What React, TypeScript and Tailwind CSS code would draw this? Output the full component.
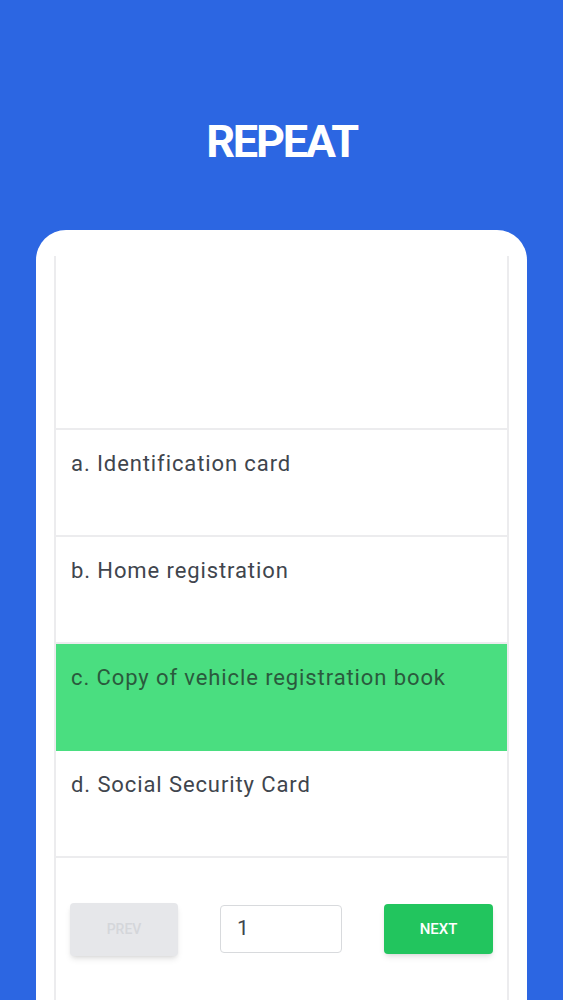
import React from 'react';

// answer choices for the current question
const choices = [
  { key: 'a', label: 'Identification card', correct: false },
  { key: 'b', label: 'Home registration', correct: false },
  { key: 'c', label: 'Copy of vehicle registration book', correct: true },
  { key: 'd', label: 'Social Security Card', correct: false },
];

const App = () => {
  return (
    <div
      className="h-[1000px] w-full overflow-hidden bg-[#2c66e2] flex flex-col items-center"
      style={{ fontFamily: 'Roboto, "Liberation Sans", sans-serif' }}
    >
      {/* Header */}
      <h1 className="mt-[112px] h-[60px] text-[45px] leading-[60px] font-bold text-white tracking-[-2.2px]">
        REPEAT
      </h1>

      {/* Card */}
      <div className="mt-[58px] w-[491px] flex-1 bg-white rounded-t-[30px] px-[18px] pt-[26px]">
        <div className="h-[172px] border-x-2 border-[#ececee]" />
        <div className="border-2 border-b-0 border-[#ececee]">
          {choices.map((c) => (
            <div
              key={c.key}
              className={
                c.correct
                  ? 'h-[107px] bg-[#4ade80] border-b-2 border-[#4ade80] px-[15px] pt-[19px]'
                  : 'h-[107px] bg-white border-b-2 border-[#ececee] px-[15px] pt-[19px]'
              }
            >
              <p
                className={
                  c.correct
                    ? 'text-[22px] leading-[30px] text-[#2a5a3d] tracking-[0.9px]'
                    : 'text-[22px] leading-[30px] text-[#40454d] tracking-[0.9px]'
                }
              >
                {c.key}. {c.label}
              </p>
            </div>
          ))}

          {/* Pager */}
          <div className="h-[150px] flex items-center justify-between px-[14px] pb-[8px]">
            <button className="w-[108px] h-[53px] rounded-[4px] bg-[#e6e7ea] shadow-md text-[14px] font-medium text-[#d4d6da]">
              PREV
            </button>
            <div className="w-[122px] h-[48px] rounded-[4px] border border-[#d8dadd] flex items-center px-[16px] text-[21px] text-[#40454d]">
              1
            </div>
            <button className="w-[109px] h-[50px] rounded-[4px] bg-[#22c55e] shadow-md text-[15px] font-medium text-white">
              NEXT
            </button>
          </div>
        </div>
      </div>
    </div>
  );
};

export default App;
